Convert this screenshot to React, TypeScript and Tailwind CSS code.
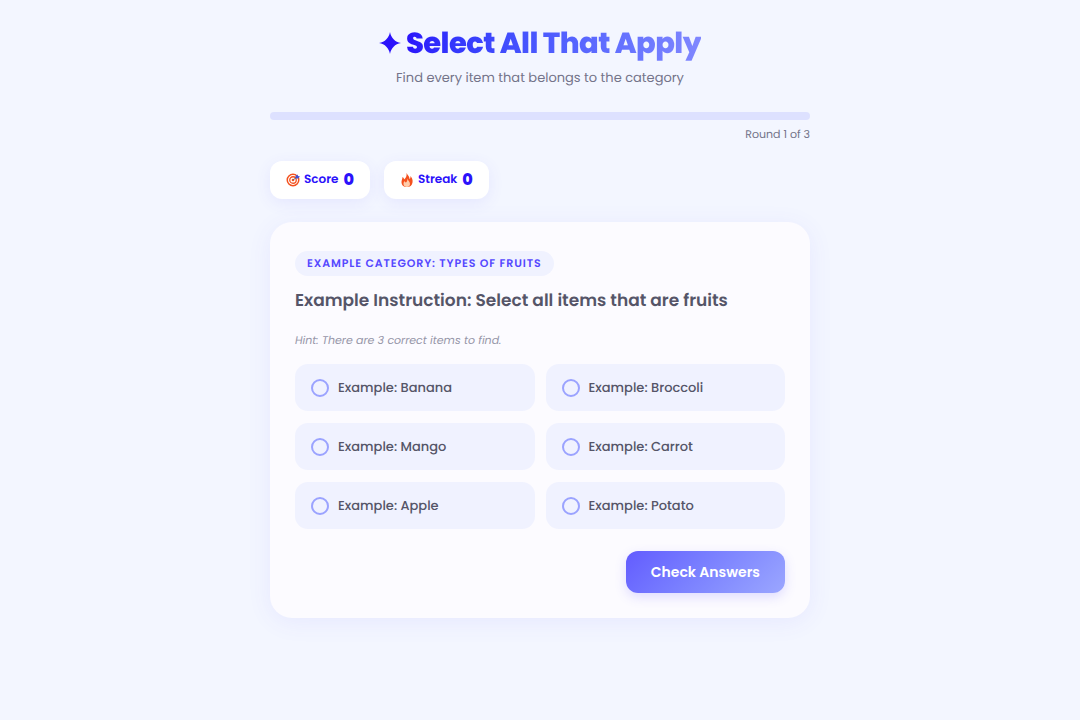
import React, { useState } from "react";

const options = [
  "Example: Banana",
  "Example: Broccoli",
  "Example: Mango",
  "Example: Carrot",
  "Example: Apple",
  "Example: Potato",
];

function StarIcon() {
  return (
    <svg viewBox="0 0 20 20" className="mb-0.5 w-[22px] h-[22px]" fill="#2b12fb" aria-hidden="true">
      <path d="M10 0C11 5.5 14.5 9 20 10C14.5 11 11 14.5 10 20C9 14.5 5.5 11 0 10C5.5 9 9 5.5 10 0Z" />
    </svg>
  );
}

function TargetIcon() {
  return (
    <svg viewBox="0 0 28 28" className="w-3.5 h-3.5" fill="none" aria-hidden="true">
      <circle cx="14" cy="14" r="11.5" fill="#fff" stroke="#f4511e" strokeWidth="3" />
      <circle cx="14" cy="14" r="6.5" stroke="#f4511e" strokeWidth="2.6" />
      <circle cx="14" cy="14" r="2.6" fill="#f4511e" />
      <path d="M14 14L22 8" stroke="#5c6b78" strokeWidth="2" />
      <path d="M19 9V6L23 3L24 6L28 7L24 11H20Z" fill="#3f51d5" />
    </svg>
  );
}

function FireIcon() {
  return (
    <svg viewBox="0 0 28 28" className="w-3.5 h-3.5" aria-hidden="true">
      <path
        d="M13 0C16 5 19 7 19 12C21 11 21 8 21 6C24 10 26 14 25 19C24 25 20 28 14 28C7 28 3 24 3 18C3 14 5 12 5 8C7 9 8 11 8 13C12 10 14 6 13 0Z"
        fill="#f4511e"
      />
      <path
        d="M15 11C15 15 20 17 20 22C20 26 17 28 14 28C10 28 7 26 7 22C7 19 8 18 9 16C10 18 11 19 12 19C14 17 15 14 15 11Z"
        fill="#ffccaa"
      />
    </svg>
  );
}

export default function App() {
  const [selected, setSelected] = useState<string[]>([]);

  const toggle = (option: string) => {
    setSelected((prev) =>
      prev.includes(option) ? prev.filter((o) => o !== option) : [...prev, option]
    );
  };

  return (
    <main className="min-h-screen bg-[#f3f6ff] px-5 pt-[26px] pb-10 font-[Poppins,Inter,sans-serif] text-[#555568] [text-rendering:geometricPrecision]">
      <div className="mx-auto max-w-[540px]">
        <header className="text-center">
          <h1 className="flex items-center justify-center gap-[5px] text-[29px] leading-9 font-extrabold tracking-[-0.02em]">
            <StarIcon />
            <span className="bg-linear-to-r from-[#2b12fb] to-[#8087ff] bg-clip-text text-transparent">
              Select All That Apply
            </span>
          </h1>
          <p className="mt-1.5 text-[13px] leading-5 text-[#74748a]">
            Find every item that belongs to the category
          </p>
        </header>

        <div
          className="mt-6 h-2 rounded-full bg-[#dde1ff]"
          role="progressbar"
          aria-label="Progress"
          aria-valuenow={0}
          aria-valuemax={3}
        />
        <p className="mt-1.5 text-right text-[11px] leading-4 text-[#74748a]">Round 1 of 3</p>

        <div className="mt-[19px] flex gap-3.5 text-xs font-semibold text-[#2b12fb]">
          <div className="flex h-[38px] items-center rounded-xl bg-white px-4 shadow-[0_4px_16px_rgba(91,79,255,0.09)]">
            <TargetIcon />
            <span className="ml-1">Score</span>
            <span className="ml-[5px] text-base font-extrabold">0</span>
          </div>
          <div className="flex h-[38px] items-center rounded-xl bg-white px-4 shadow-[0_4px_16px_rgba(91,79,255,0.09)]">
            <FireIcon />
            <span className="ml-1">Streak</span>
            <span className="ml-[5px] text-base font-extrabold">0</span>
          </div>
        </div>

        <section className="mt-[23px] rounded-[22px] bg-[#fcfbff] px-[25px] pt-[29px] pb-[25px] shadow-[0_4px_24px_rgba(91,79,255,0.08)]">
          <span className="flex h-[25px] w-fit items-center rounded-full bg-[#f0f2ff] px-3 text-[11px] font-semibold uppercase tracking-[0.08em] text-[#5548ff]">
            Example Category: Types of Fruits
          </span>
          <h2 className="mt-3 text-[17px] leading-6 font-semibold">
            Example Instruction: Select all items that are fruits
          </h2>
          <p className="mt-[18px] text-[11px] leading-5 italic text-[#9696a8]">
            Hint: There are 3 correct items to find.
          </p>

          <div className="mt-3.5 grid grid-cols-2 gap-x-[11px] gap-y-3">
            {options.map((option) => (
              <label
                key={option}
                className="flex h-[47px] cursor-pointer items-center gap-[9px] rounded-[13px] bg-[#f0f2ff] px-4 text-[13px] font-medium"
              >
                <input
                  type="checkbox"
                  checked={selected.includes(option)}
                  onChange={() => toggle(option)}
                  className="h-[18px] w-[18px] shrink-0 appearance-none rounded-full border-2 border-[#9ba3ff] checked:bg-[#6c63ff]"
                />
                {option}
              </label>
            ))}
          </div>

          <div className="mt-[22px] flex justify-end">
            <button
              type="button"
              className="h-[42px] rounded-xl bg-linear-135 from-[#635bff] to-[#9ba6ff] px-[25px] text-sm font-semibold text-white shadow-[0_4px_12px_rgba(91,79,255,0.18)]"
            >
              Check Answers
            </button>
          </div>
        </section>
      </div>
    </main>
  );
}
